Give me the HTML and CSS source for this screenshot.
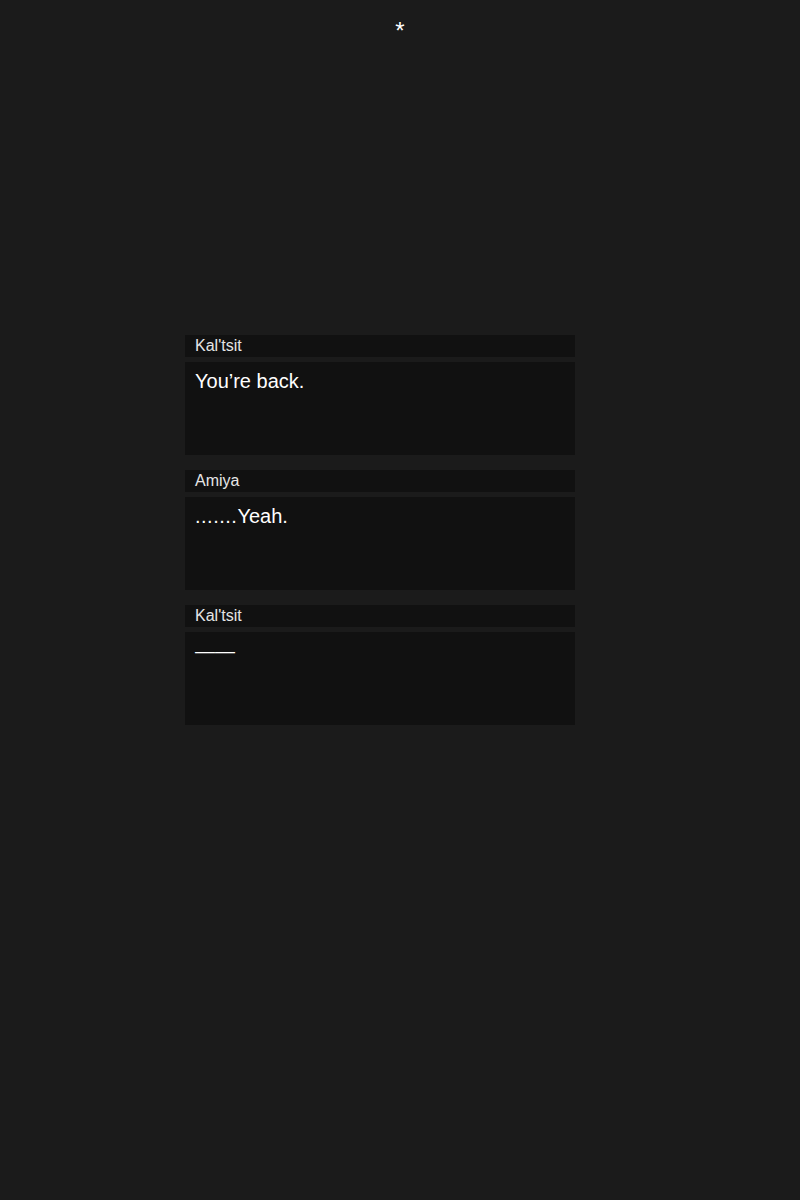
FILE: index.html
```html
<!DOCTYPE html>
<html>
<head>
<meta charset="utf-8">
<link rel="stylesheet" href="styles.css">
</head>
<body>
<header class="top">*</header>
<main class="log">
  <section class="entry">
    <div class="name">Kal'tsit</div>
    <div class="line">You’re back.</div>
  </section>
  <section class="entry">
    <div class="name">Amiya</div>
    <div class="line"><span class="dots">.......</span>Yeah.</div>
  </section>
  <section class="entry">
    <div class="name">Kal'tsit</div>
    <div class="line">——</div>
  </section>
</main>
</body>
</html>
```
FILE: styles.css
```css
html, body {
  margin: 0;
  padding: 0;
  background: #1b1b1b;
  font-family: "Liberation Sans", Arial, sans-serif;
  color: #fff;
}
body {
  width: 800px;
  height: 1200px;
}
.top {
  text-align: center;
  font-size: 24px;
  line-height: 24px;
  padding-top: 19px;
  height: 24px;
}
.log {
  width: 430px;
  margin: 292px auto 0;
  display: flex;
  flex-direction: column;
  gap: 15px;
}
.entry {
  width: 390px;
  display: flex;
  flex-direction: column;
  gap: 5px;
}
.name {
  background: #111;
  height: 22px;
  line-height: 21px;
  padding: 0 10px;
  font-size: 16px;
  color: #e6e6e6;
}
.line {
  background: #111;
  height: 93px;
  padding: 8px 10px 0;
  box-sizing: border-box;
  font-size: 20px;
  line-height: 22px;
  color: #fff;
}
.dots {
  letter-spacing: 0.5px;
}
```
